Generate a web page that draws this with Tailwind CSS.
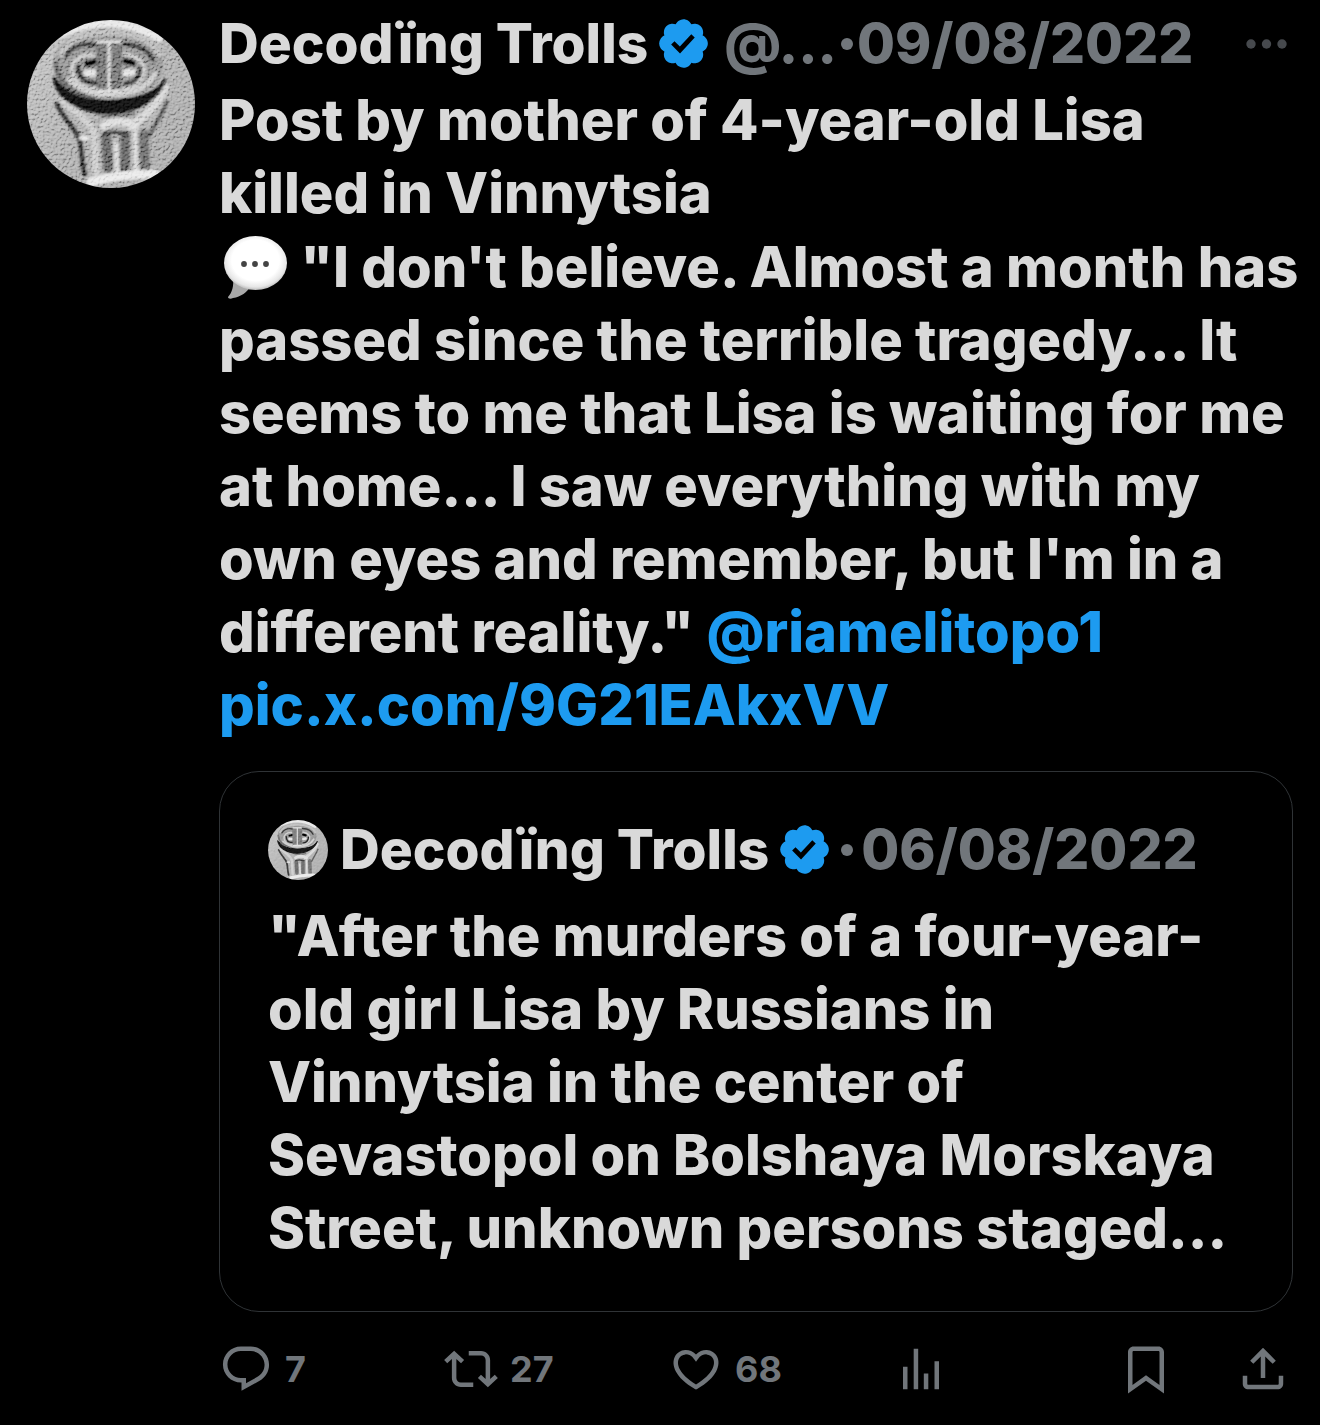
<!DOCTYPE html>
<html lang="en">
<head>
  <meta charset="UTF-8">
  <meta name="viewport" content="width=device-width, initial-scale=1.0">
  <title>Decodïng Trolls on X</title>
  <script src="https://cdn.jsdelivr.net/npm/@tailwindcss/browser@4"></script>
</head>
<body class="bg-black text-[#d9d9d9] font-['Inter',sans-serif] font-extrabold">
  <!-- shared shapes -->
  <svg class="absolute w-0 h-0" aria-hidden="true">
    <defs>
      <clipPath id="round"><circle cx="84" cy="84" r="84"/></clipPath>
      <linearGradient id="stone" x1="0" y1="0" x2="1" y2="1">
        <stop offset="0" stop-color="#bdbdbd"/>
        <stop offset="0.5" stop-color="#a8a8a8"/>
        <stop offset="1" stop-color="#a0a0a0"/>
      </linearGradient>
      <filter id="soft" x="-20%" y="-20%" width="140%" height="140%"><feGaussianBlur stdDeviation="1"/></filter>
      <filter id="grain" x="0" y="0" width="100%" height="100%">
        <feTurbulence type="fractalNoise" baseFrequency="0.4" numOctaves="3" seed="4" result="n"/>
        <feDiffuseLighting in="n" surfaceScale="3" lighting-color="#ffffff">
          <feDistantLight azimuth="240" elevation="36"/>
        </feDiffuseLighting>
      </filter>
      <radialGradient id="bubble" cx="0.5" cy="0.45" r="0.58">
        <stop offset="0.65" stop-color="#ffffff"/>
        <stop offset="0.85" stop-color="#e6e6e6"/>
        <stop offset="1" stop-color="#a8a8a8"/>
      </radialGradient>
    </defs>
    <symbol id="avatar" viewBox="0 0 168 168">
      <g clip-path="url(#round)">
        <rect width="168" height="168" fill="url(#stone)"/>
        <g filter="url(#soft)" fill="none" stroke-linecap="round" stroke-linejoin="round">
          <path d="M34 14Q84-10 132 18" stroke="#e4e4e4" stroke-width="8"/>
          <!-- arms and body -->
          <path d="M31 80C46 90 58 94 66 96H104C118 88 130 76 136 66C142 60 145 68 141 78C136 92 128 104 125 120L124 152L62 160C56 138 54 118 48 106C42 96 32 90 31 80Z" fill="#a6a6a6"/>
          <path d="M30 84C36 98 48 108 52 118C56 130 54 144 58 154" stroke="#262626" stroke-width="5"/>
          <path d="M36 82C50 92 62 102 67 112L69 152" stroke="#c6c6c6" stroke-width="7"/>
          <path d="M138 68C130 86 116 98 104 106" stroke="#d0d0d0" stroke-width="8"/>
          <path d="M140 82C134 96 126 108 122 116" stroke="#4a4a4a" stroke-width="4"/>
          <path d="M72 92C84 98 96 96 104 92" stroke="#6e6e6e" stroke-width="7"/>
          <!-- legs -->
          <path d="M77 106C84 100 100 100 108 106" stroke="#d8d8d8" stroke-width="8"/>
          <path d="M79 116L81 148M98 118V148" stroke="#585858" stroke-width="10"/>
          <path d="M117 114L118 148" stroke="#606060" stroke-width="10"/>
          <path d="M78 114C84 111 92 112 101 114" stroke="#2c2c2c" stroke-width="4"/>
          <path d="M89 124L90 150M108 112L109 150" stroke="#d8d8d8" stroke-width="4"/>
          <path d="M54 118H60" stroke="#e8e8e8" stroke-width="4"/>
          <path d="M64 162Q92 154 128 154" stroke="#e6e6e6" stroke-width="9"/>
          <!-- shadow under the head -->
          <path d="M27 58C30 78 50 92 82 93C112 92 132 78 138 60C132 72 112 80 82 81C54 80 36 72 27 58Z" fill="#080808" stroke="#080808" stroke-width="3"/>
          <!-- head -->
          <path d="M82 10C114 10 136 24 136 46C136 66 114 78 82 79C50 78 27 66 27 44C27 22 50 10 82 10Z" fill="#8a8a8a"/>
          <path d="M34 34C42 18 58 13 82 13C110 13 124 20 132 34" stroke="#b4b4b4" stroke-width="6"/>
          <path d="M29 44C30 62 44 72 64 76" stroke="#5a5a5a" stroke-width="5"/>
          <path d="M39 36C46 25 58 23 68 25M97 24C112 25 122 31 126 40" stroke="#242424" stroke-width="4"/>
          <path d="M42 60C52 70 66 75 82 75C104 75 120 68 128 54" stroke="#c8c8c8" stroke-width="5"/>
          <!-- eyes -->
          <path d="M66 35C52 34 44 42 45 52C47 62 56 69 68 69" stroke="#c4c4c4" stroke-width="4"/>
          <path d="M98 34C113 36 120 46 116 56C112 65 104 69 97 69" stroke="#c4c4c4" stroke-width="4"/>
          <path d="M51 46C51 57 58 63 68 63M98 64C108 63 114 56 113 48" stroke="#141414" stroke-width="4"/>
          <path d="M60 44L67 42M98 41L106 43" stroke="#060606" stroke-width="6"/>
          <path d="M60 53H66M99 53L105 52" stroke="#e0e0e0" stroke-width="7"/>
          <path d="M71 24H93V68H71Z" fill="#6c6c6c" stroke="#585858" stroke-width="2"/>
          <path d="M82 23V69M71 71H93M70 22H93" stroke="#dcdcdc" stroke-width="3"/>
        </g>
        <rect width="168" height="168" filter="url(#grain)" class="mix-blend-soft-light" opacity="0.7"/>
      </g>
    </symbol>
    <symbol id="verified" viewBox="0 0 22 22">
      <path fill="#1d9bf0" d="M20.396 11c-.018-.646-.215-1.275-.57-1.816-.354-.54-.852-.972-1.438-1.246.223-.607.27-1.264.14-1.897-.131-.634-.437-1.218-.882-1.687-.47-.445-1.053-.75-1.687-.882-.633-.13-1.29-.083-1.897.14-.273-.587-.704-1.086-1.245-1.44S11.647 1.62 11 1.604c-.646.017-1.273.213-1.813.568s-.969.854-1.24 1.44c-.608-.223-1.267-.272-1.902-.14-.635.13-1.22.436-1.69.882-.445.47-.749 1.055-.878 1.688-.13.633-.08 1.29.144 1.896-.587.274-1.087.705-1.443 1.245-.356.54-.555 1.17-.574 1.817.02.647.218 1.276.574 1.817.356.54.856.972 1.443 1.245-.224.606-.274 1.263-.144 1.896.13.634.433 1.218.877 1.688.47.443 1.054.747 1.687.878.633.132 1.29.084 1.897-.136.274.586.705 1.084 1.246 1.439.54.354 1.17.551 1.816.569.647-.016 1.276-.213 1.817-.567s.972-.854 1.245-1.44c.604.239 1.266.296 1.903.164.636-.132 1.22-.447 1.68-.907.46-.46.776-1.044.908-1.681s.075-1.299-.165-1.903c.586-.274 1.084-.705 1.439-1.246.354-.54.551-1.17.569-1.816zM9.662 14.85l-3.429-3.428 1.293-1.302 2.072 2.072 4.4-4.794 1.347 1.246z"/>
    </symbol>
  </svg>

  <article class="flex gap-6 px-[27px] pt-[7px] pb-7">
    <a href="#" aria-label="Decodïng Trolls" class="shrink-0 mt-[13px] self-start">
      <svg class="size-[168px]"><use href="#avatar"/></svg>
    </a>

    <div class="flex-1 min-w-0">
      <header class="flex items-center text-[55px] leading-[73px] whitespace-nowrap text-[#71767b]">
        <a href="#" class="text-[#d9d9d9]">Decodïng Trolls</a>
        <svg class="size-[57px] shrink-0 ml-[7px]" role="img" aria-label="Verified account"><use href="#verified"/></svg>
        <span class="ml-3">@...</span>
        <span class="mx-1 size-3 rounded-full bg-[#71767b]"></span>
        <a href="#"><time datetime="2022-08-09">09/08/2022</time></a>
        <button type="button" aria-label="More" class="ml-auto mr-1">
          <svg class="w-[44px] h-3" viewBox="0 0 44 12" fill="#46494d"><circle cx="6" cy="6" r="4.7"/><circle cx="21.500" cy="6" r="4.7"/><circle cx="37" cy="6" r="4.7"/></svg>
        </button>
      </header>

      <p class="mt-1 text-[56px] leading-[73px] whitespace-nowrap">
        Post by mother of 4-year-old Lisa<br>
        killed in Vinnytsia
      </p>
      <p class="mt-px text-[56px] leading-[73px] whitespace-nowrap">
        <svg class="inline-block w-[69px] h-[64px] -mt-2" viewBox="0 0 69 64" role="img" aria-label="Speech balloon">
          <path fill="#a9a9a9" d="M14 42C15 50 13 57 9 61C9 63 12 63 14 62C22 61 28 56 32 50Z"/>
          <ellipse cx="36.500" cy="27" rx="31.500" ry="27" fill="url(#bubble)"/>
          <g fill="#444"><circle cx="25" cy="28" r="2.900"/><circle cx="36" cy="28" r="2.900"/><circle cx="47" cy="28" r="2.900"/></g>
        </svg>
        "I don't believe. Almost a month has<br>
        passed since the terrible tragedy... It<br>
        seems to me that Lisa is waiting for me<br>
        at home... I saw everything with my<br>
        own eyes and remember, but I'm in a<br>
        different reality." <a href="#" class="text-[#1d9bf0]">@riamelitopo1</a><br>
        <a href="#" class="text-[#1d9bf0]">pic.x.com/9G21EAkxVV</a>
      </p>

      <section class="mt-[29px] rounded-[40px] border border-[#2f3336] px-12 pt-[41px] pb-[46px]">
        <div class="flex items-center text-[55px] leading-[73px] whitespace-nowrap text-[#71767b]">
          <svg class="size-[60px] shrink-0 mr-3"><use href="#avatar"/></svg>
          <a href="#" class="text-[#d9d9d9]">Decodïng Trolls</a>
          <svg class="size-[57px] shrink-0 ml-[7px]" role="img" aria-label="Verified account"><use href="#verified"/></svg>
          <span class="mx-2 size-3 rounded-full bg-[#71767b]"></span>
          <time datetime="2022-08-06">06/08/2022</time>
        </div>
        <p class="mt-[14px] text-[56px] leading-[73px] whitespace-nowrap">
          "After the murders of a four-year-<br>
          old girl Lisa by Russians in<br>
          Vinnytsia in the center of<br>
          Sevastopol on Bolshaya Morskaya<br>
          Street, unknown persons staged...
        </p>
      </section>

      <footer class="mt-[30px] flex items-center text-[36px] leading-[54px] text-[#71767b] font-bold">
        <button type="button" aria-label="Reply" class="flex-1 flex items-center gap-3">
          <svg class="size-[54px]" viewBox="0 0 24 24" fill="currentColor"><path d="M1.751 10c0-4.420 3.584-8 8.005-8h4.366c4.490 0 8.129 3.640 8.129 8.130 0 2.960-1.607 5.680-4.196 7.110l-8.054 4.460v-3.690h-.067c-4.490.1-8.183-3.510-8.183-8.010zm8.005-6c-3.317 0-6.005 2.690-6.005 6 0 3.370 2.770 6.080 6.138 6.010l.351-.01h1.761v2.300l5.087-2.810c1.951-1.080 3.163-3.130 3.163-5.360 0-3.390-2.744-6.130-6.129-6.130H9.756z"/></svg>
          <span>7</span>
        </button>
        <button type="button" aria-label="Repost" class="flex-1 flex items-center gap-3">
          <svg class="size-[54px]" viewBox="0 0 24 24" fill="currentColor"><path d="M4.500 3.880l4.432 4.140-1.364 1.460L5.500 7.550V16c0 1.100.896 2 2 2H13v2H7.500c-2.209 0-4-1.790-4-4V7.550L1.432 9.480.068 8.020 4.500 3.880zM16.500 6H11V4h5.500c2.209 0 4 1.790 4 4v8.450l2.068-1.930 1.364 1.460-4.432 4.140-4.432-4.140 1.364-1.460 2.068 1.930V8c0-1.100-.896-2-2-2z"/></svg>
          <span>27</span>
        </button>
        <button type="button" aria-label="Like" class="flex-1 flex items-center gap-3">
          <svg class="size-[54px]" viewBox="0 0 24 24" fill="currentColor"><path d="M16.697 5.500c-1.222-.06-2.679.51-3.890 2.160l-.805 1.090-.806-1.090C9.984 6.010 8.526 5.440 7.304 5.500c-1.243.07-2.349.78-2.910 1.910-.552 1.120-.633 2.780.479 4.820 1.074 1.970 3.257 4.270 7.129 6.610 3.870-2.340 6.052-4.640 7.126-6.610 1.111-2.040 1.030-3.700.477-4.820-.561-1.130-1.666-1.840-2.908-1.910zm4.187 7.690c-1.351 2.480-4.001 5.120-8.379 7.670l-.503.3-.504-.3c-4.379-2.550-7.029-5.190-8.382-7.670-1.360-2.500-1.410-4.860-.514-6.670.887-1.790 2.647-2.910 4.601-3.010 1.651-.09 3.368.56 4.798 2.010 1.429-1.450 3.146-2.100 4.796-2.010 1.954.1 3.714 1.220 4.601 3.010.896 1.810.846 4.170-.514 6.670z"/></svg>
          <span>68</span>
        </button>
        <button type="button" aria-label="Views" class="flex-1 flex items-center">
          <svg class="size-[54px]" viewBox="0 0 24 24" fill="currentColor"><path d="M8.750 21V3h2v18h-2zM18 21V8.500h2V21h-2zM4 21l.004-10h2L6 21H4zm9.248 0v-7h2v7h-2z"/></svg>
        </button>
        <div class="flex w-[174px] shrink-0 gap-[63px]">
          <button type="button" aria-label="Bookmark">
            <svg class="size-[54px]" viewBox="0 0 24 24" fill="currentColor"><path d="M4 4.500C4 3.120 5.119 2 6.500 2h11C18.881 2 20 3.120 20 4.500v18.440l-8-5.710-8 5.710V4.500zM6.500 4c-.276 0-.5.220-.5.5v14.560l6-4.290 6 4.290V4.500c0-.28-.224-.5-.5-.5h-11z"/></svg>
          </button>
          <button type="button" aria-label="Share">
            <svg class="size-[54px]" viewBox="0 0 24 24" fill="currentColor"><path d="M12 2.590l5.700 5.700-1.410 1.420L13 6.410V16h-2V6.410l-3.300 3.300-1.410-1.420L12 2.590zM21 15l-.02 3.510c0 1.380-1.120 2.490-2.500 2.490H5.500C4.110 21 3 19.880 3 18.500V15h2v3.500c0 .28.220.5.5.5h12.980c.28 0 .5-.22.5-.5L19 15h2z"/></svg>
          </button>
        </div>
      </footer>
    </div>
  </article>
</body>
</html>
